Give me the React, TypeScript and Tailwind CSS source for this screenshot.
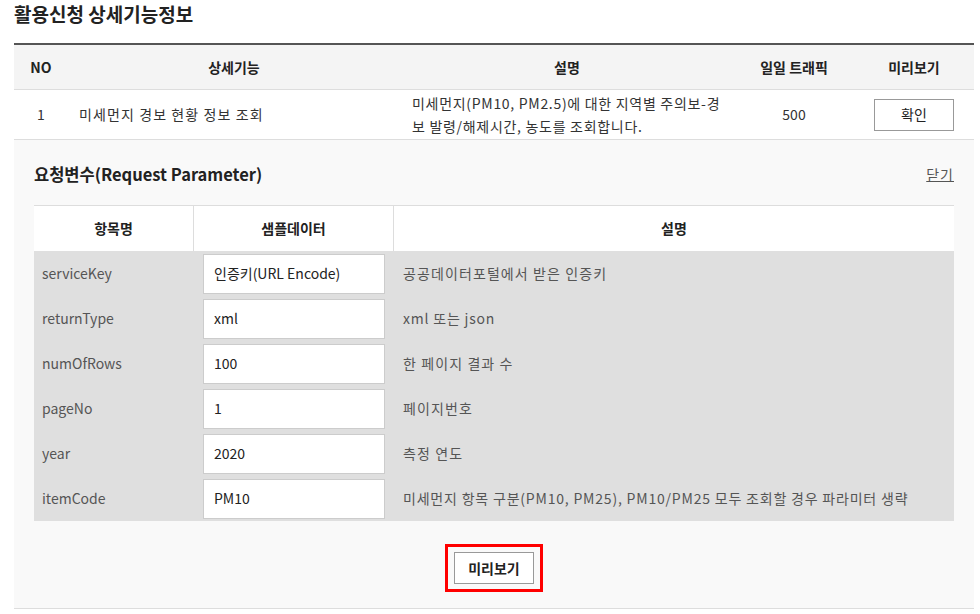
import React from 'react';

// desc spacing: Hangul-heavy texts get wider tracking to match the reference
const params = [
  { name: 'serviceKey', sample: '인증키(URL Encode)', desc: '공공데이터포털에서 받은 인증키', wide: true },
  { name: 'returnType', sample: 'xml', desc: 'xml 또는 json', wide: false },
  { name: 'numOfRows', sample: '100', desc: '한 페이지 결과 수', wide: true },
  { name: 'pageNo', sample: '1', desc: '페이지번호', wide: true },
  { name: 'year', sample: '2020', desc: '측정 연도', wide: true },
  { name: 'itemCode', sample: 'PM10', desc: '미세먼지 항목 구분(PM10, PM25), PM10/PM25 모두 조회할 경우 파라미터 생략', wide: false },
];

export default function App() {
  return (
    <div
      className="w-[980px] h-[614px] bg-white text-[#333] overflow-hidden"
      style={{ fontFamily: '"Noto Sans CJK KR", "Noto Sans", sans-serif' }}
    >
      <div className="ml-[14px] w-[960px]">
        {/* page title */}
        <h1 className="h-[43px] pt-[1px] text-[19px] font-bold leading-[26px] text-[#222]">활용신청 상세기능정보</h1>

        {/* detail function table */}
        <div className="border-t-2 border-[#555]">
          <div className="grid grid-cols-[54px_332px_334px_120px_120px] h-[45px] items-center bg-[#f4f4f4] border-b border-[#ddd] text-[14px] font-bold text-center text-[#222]">
            <div>NO</div>
            <div>상세기능</div>
            <div>설명</div>
            <div>일일 트래픽</div>
            <div>미리보기</div>
          </div>
          <div className="grid grid-cols-[54px_332px_334px_120px_120px] h-[50px] items-center border-b border-[#ddd] text-[14px] text-[#333]">
            <div className="text-center">1</div>
            <div className="pl-[11px] tracking-[1.1px]">미세먼지 경보 현황 정보 조회</div>
            <div className="pl-[12px] leading-[23px] tracking-[0.7px]">
              미세먼지(PM10, PM2.5)에 대한 지역별 주의보-경
              <br />
              보 발령/해제시간, 농도를 조회합니다.
            </div>
            <div className="text-center">500</div>
            <div className="flex justify-center">
              <button className="w-[80px] h-[32px] border border-[#999] bg-white text-[14px] text-[#222]">확인</button>
            </div>
          </div>

          {/* request parameter panel */}
          <div className="bg-[#f9f9f9] px-[20px] border-b border-[#ddd]">
            <div className="h-[65px] pt-[3px] flex items-center justify-between">
              <h2 className="text-[16.5px] font-bold text-[#222] leading-[24px]">요청변수(Request Parameter)</h2>
              <a href="#" className="text-[14px] text-[#555] underline leading-[20px] tracking-[1px]">닫기</a>
            </div>

            <div className="border-t border-[#ddd]">
              <div className="grid grid-cols-[160px_200px_560px] h-[45px] bg-white text-[14px] font-bold text-center text-[#222]">
                <div className="flex items-center justify-center border-r border-[#ddd]">항목명</div>
                <div className="flex items-center justify-center border-r border-[#ddd]">샘플데이터</div>
                <div className="flex items-center justify-center">설명</div>
              </div>
              <div className="bg-[#dfdfdf]">
                {params.map((p) => (
                  <div key={p.name} className="grid grid-cols-[160px_200px_560px] h-[45px] items-center text-[14px] text-[#555]">
                    <div className="pl-[8px]">{p.name}</div>
                    <div className="px-[9px]">
                      <div className="h-[40px] border border-[#ccc] bg-white flex items-center pl-[10px] text-[#222]">{p.sample}</div>
                    </div>
                    <div className={p.wide ? 'pl-[9px] tracking-[1.1px]' : 'pl-[9px] tracking-[0.8px]'}>{p.desc}</div>
                  </div>
                ))}
              </div>
            </div>

            <div className="flex justify-center pt-[23px] pb-[16px]">
              <div className="border-[3px] border-[#ff0000] px-[6px] py-[5px]">
                <button className="w-[80px] h-[32px] border border-[#999] bg-white text-[14px] font-bold text-[#222]">미리보기</button>
              </div>
            </div>
          </div>
        </div>
      </div>
    </div>
  );
}
